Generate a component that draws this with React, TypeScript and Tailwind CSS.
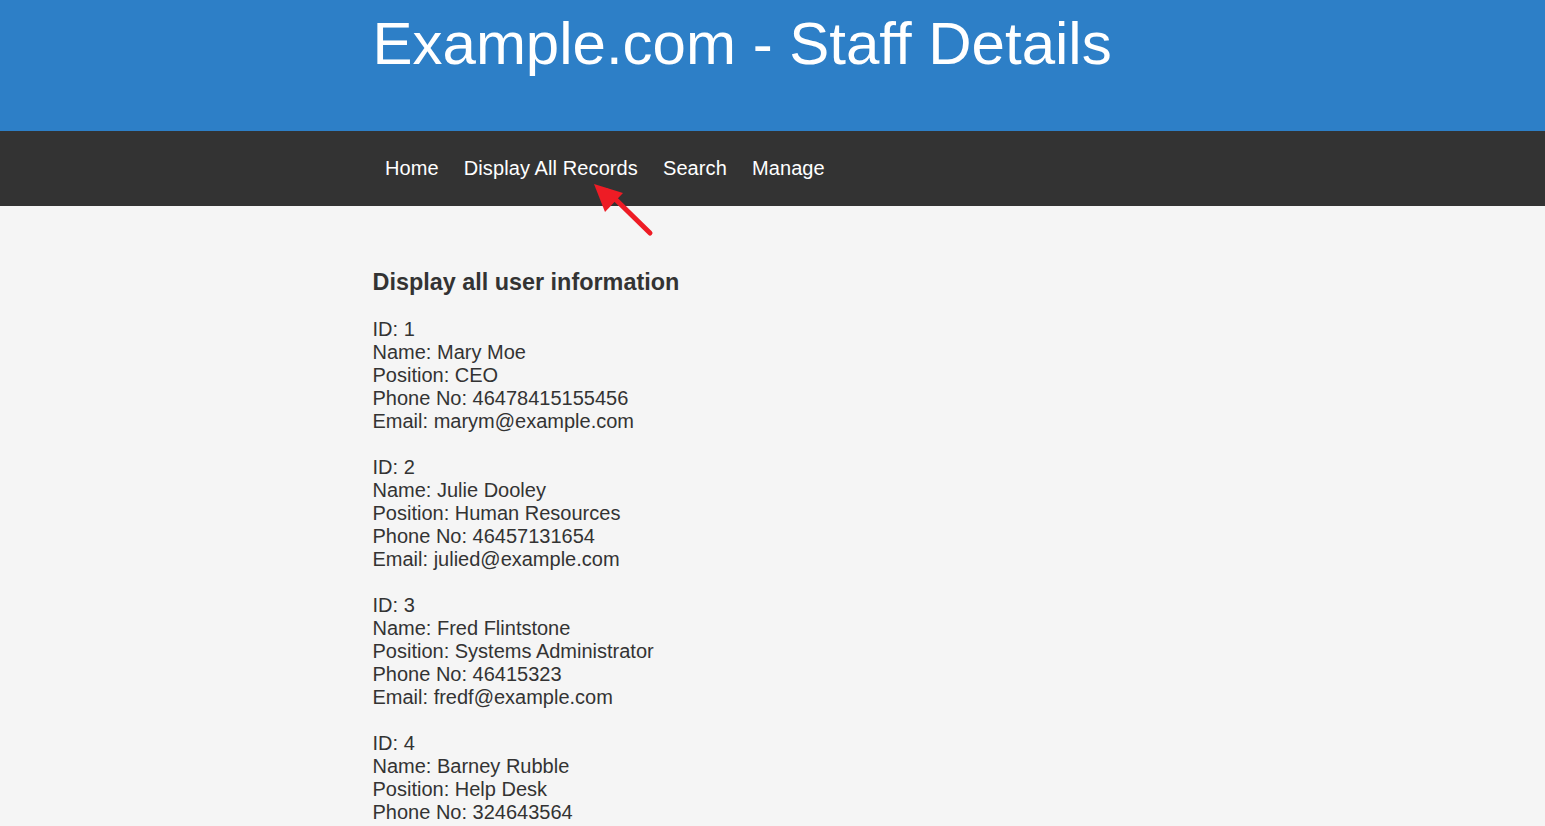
const staff = [
  { id: 1, name: "Mary Moe", position: "CEO", phone: "46478415155456", email: "marym@example.com" },
  { id: 2, name: "Julie Dooley", position: "Human Resources", phone: "46457131654", email: "julied@example.com" },
  { id: 3, name: "Fred Flintstone", position: "Systems Administrator", phone: "46415323", email: "fredf@example.com" },
  { id: 4, name: "Barney Rubble", position: "Help Desk", phone: "324643564", email: "barneyr@example.com" },
];

function App() {
  return (
    <div className="min-h-screen bg-[#f5f5f5] text-[#333] font-['Liberation_Sans',Arial,sans-serif]">
      {/* header */}
      <header className="bg-[#2d7fc7] h-[131px]">
        <div className="w-[800px] mx-auto pt-[9px]">
          <h1 className="text-white text-[60px] leading-[69px] font-normal">Example.com - Staff Details</h1>
        </div>
      </header>

      {/* nav */}
      <nav className="bg-[#333] h-[75px] relative">
        <ul className="w-[800px] mx-auto h-full flex items-center pb-[2px] text-white text-[20px] tracking-[0.1px]">
          <li className="px-[12.5px]">Home</li>
          <li className="px-[12.5px]">Display All Records</li>
          <li className="px-[12.5px]">Search</li>
          <li className="px-[12.5px]">Manage</li>
        </ul>
        <svg className="absolute left-[590px] top-[48px]" width="70" height="60" viewBox="0 0 70 60">
          <line x1="17" y1="12" x2="60" y2="54" stroke="#ee1c25" strokeWidth="5" strokeLinecap="round" />
          <polygon points="4,5 33,14 15,33" fill="#ee1c25" />
        </svg>
      </nav>

      {/* content */}
      <main className="w-[800px] mx-auto pt-[63px] text-[20px] leading-[23px]">
        <h3 className="text-[23.4px] leading-[27px] font-bold mb-[22px]">Display all user information</h3>
        {staff.map((s) => (
          <div key={s.id} className="mb-[23px]">
            <div>ID: {s.id}</div>
            <div>Name: {s.name}</div>
            <div>Position: {s.position}</div>
            <div>Phone No: {s.phone}</div>
            <div>Email: {s.email}</div>
          </div>
        ))}
      </main>
    </div>
  );
}

export default App;
